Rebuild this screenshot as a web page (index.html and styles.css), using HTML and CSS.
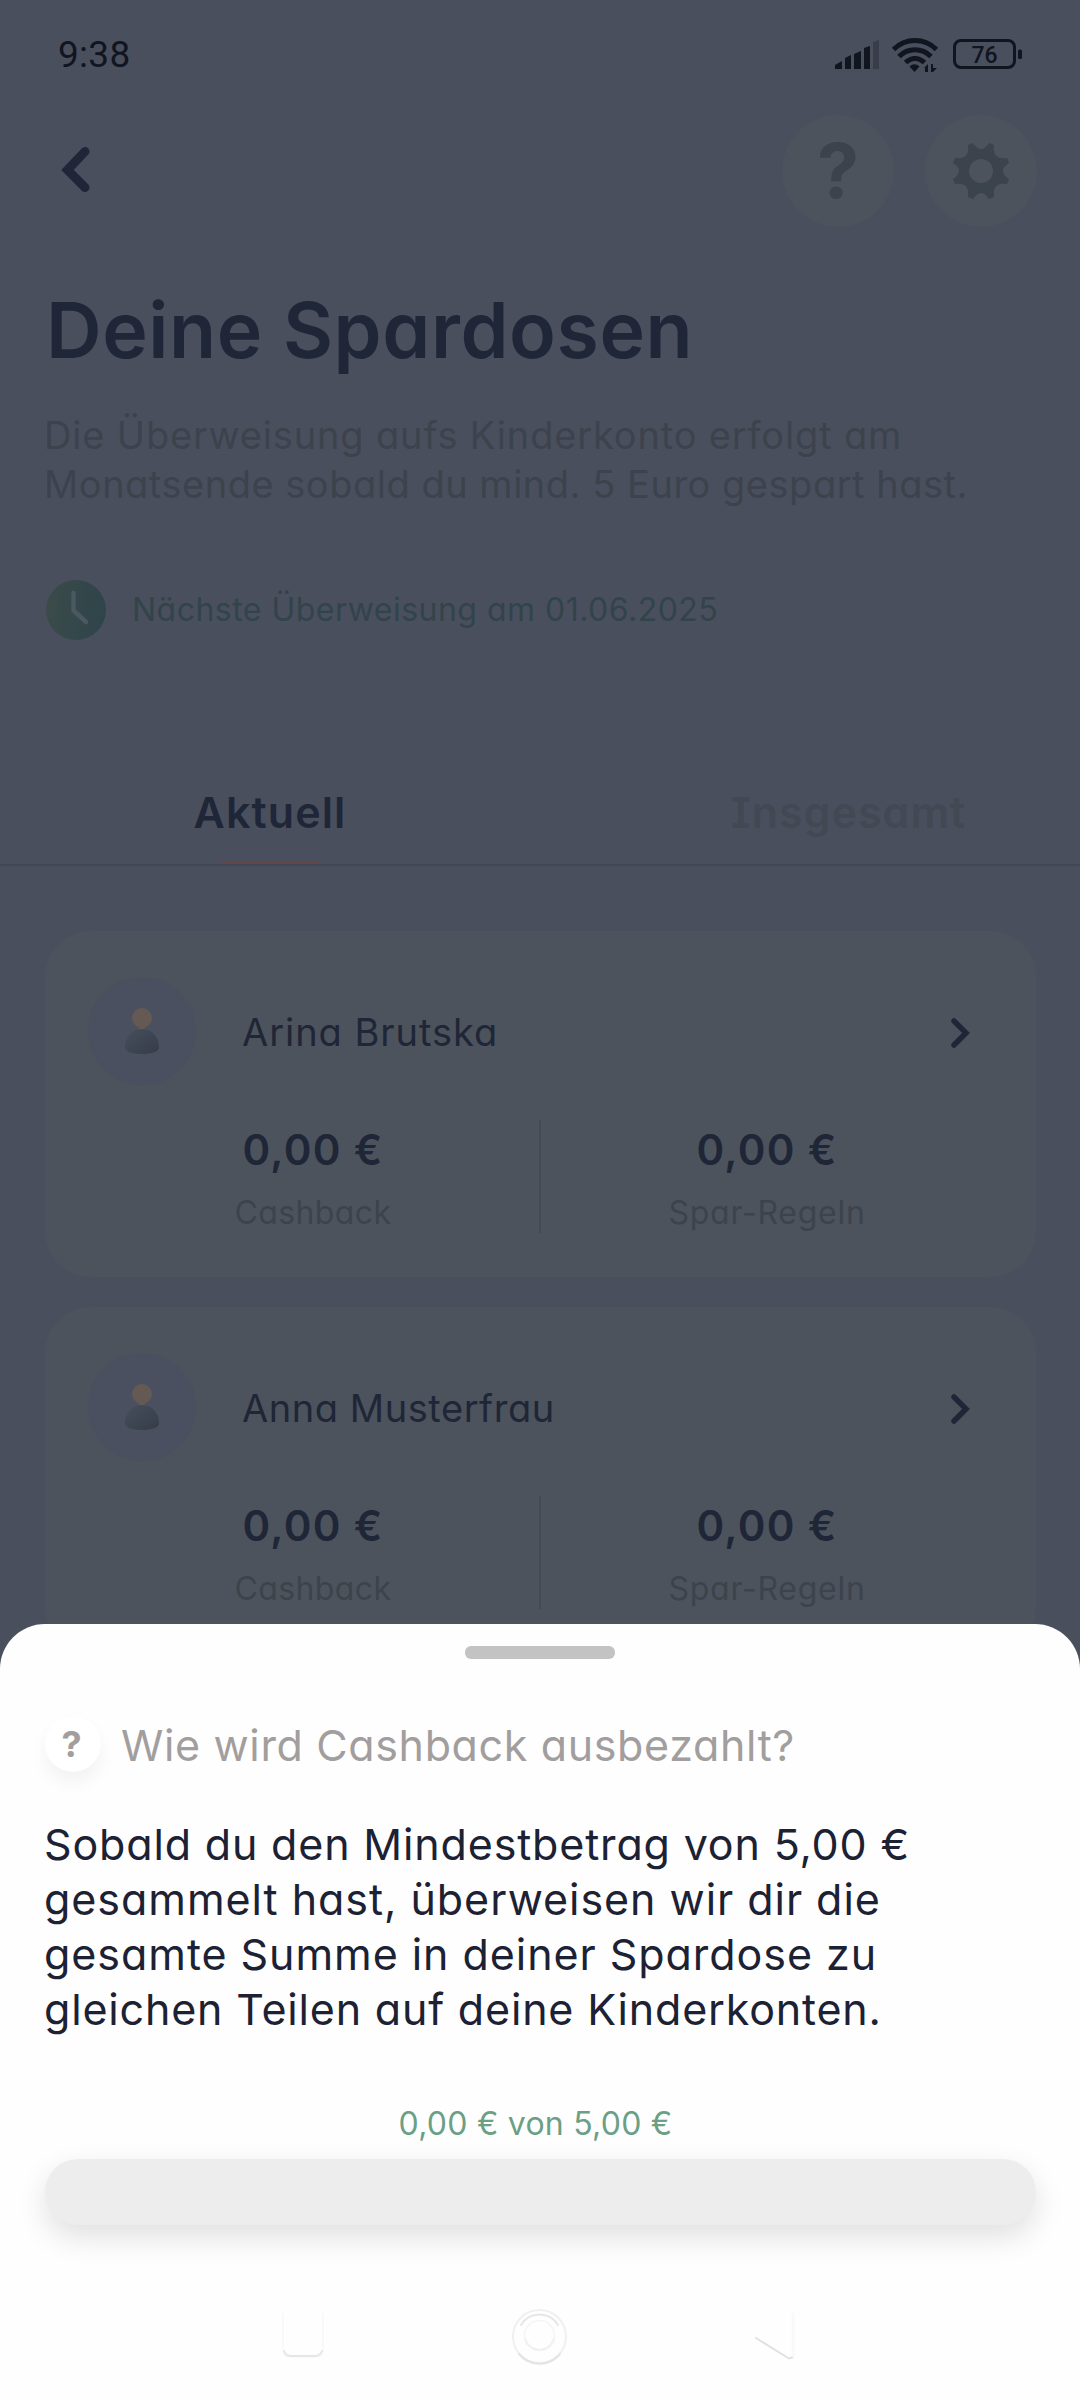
FILE: index.html
```html
<!DOCTYPE html>
<html lang="de">
<head>
<meta charset="utf-8">
<title>Deine Spardosen</title>
<link rel="stylesheet" href="styles.css">
</head>
<body>
<svg class="defs" width="0" height="0">
  <defs>
    <linearGradient id="clock-fill" x1="0" x2="1"><stop offset="0" stop-color="#3a4b49"/><stop offset="1" stop-color="#2f444b"/></linearGradient>
    <linearGradient id="body-fill" x1="0" x2="1" y2="1"><stop offset="0" stop-color="#454e5b"/><stop offset="1" stop-color="#353d49"/></linearGradient>
    <symbol id="person" viewBox="0 0 36 48">
      <circle cx="18" cy="11" r="10" fill="#655953"/>
      <path d="M15 19h6v5h-6z" fill="#655953"/>
      <path d="M18 22c10 0 17 8 17 18 0 5-8 7-17 7s-17-2-17-7c0-10 7-18 17-18z" fill="url(#body-fill)"/>
    </symbol>
    <symbol id="chevron" viewBox="0 0 22 32"><path d="M5 4l12 12L5 28" fill="none" stroke="#1f2637" stroke-width="5.500" stroke-linecap="round"/></symbol>
  </defs>
</svg>
<div class="phone">
  <div class="status">
    <span class="time">9:38</span>
    <svg class="status-icons" width="192" height="40" viewBox="833 34 192 40">
      <g fill="#10151f">
        <path d="M835 65l7-4v8h-7zM845 58l6-3v14h-6zM854 54l7-3v18h-7zM864 48l6-2v23h-6z"/>
        <path d="M873 42l6-2v29h-6z" fill="#383d49"/>
      </g>
      <g fill="none" stroke="#10151f" stroke-width="5">
        <path d="M893.500 49.500c12-12 31-12 43 0M899 56.500c9-9 23-9 32 0M905.500 62.500c6-5.500 13-5.500 19 0"/>
      </g>
      <path d="M909.500 66.500q5-4.500 10 0l-5 5.500zM924 68l4-4v8h-3v-4zM931 64h2v4h4l-4 4h-2z" fill="#10151f"/>
      <rect x="954.500" y="40.500" width="60" height="27" rx="6.500" fill="none" stroke="#10151f" stroke-width="3"/>
      <rect x="1018" y="49.500" width="4" height="9.500" rx="1.500" fill="#10151f"/>
      <text class="battery" x="984.500" y="62.500" text-anchor="middle">76</text>
    </svg>
  </div>
  <header class="bar">
    <svg class="back" width="32" height="50" viewBox="60 146 32 50"><path d="M85 151.500L67.500 170 85 187.500" fill="none" stroke="#1f2637" stroke-width="9" stroke-linecap="round" stroke-linejoin="miter"/></svg>
    <div class="round help">?</div>
    <div class="round">
      <svg width="58" height="58" viewBox="-29 -29 58 58">
        <path fill="#3b434d" d="M-13-26L-8-28Q0-16 8-28L13-26Q11-11 26-13L28-8Q16 0 28 8L26 13Q11 11 13 26L8 28Q0 16-8 28L-13 26Q-11 11-26 13L-28 8Q-16 0-28-8L-26-13Q-11-11-13-26Z"/>
        <circle r="12" fill="#4c535c"/>
      </svg>
    </div>
  </header>
  <h1 class="title">Deine Spardosen</h1>
  <p class="intro"><span class="intro-a">Die Überweisung aufs Kinderkonto erfolgt am</span><br><span class="intro-b">Monatsende sobald du mind. 5 Euro gespart hast.</span></p>
  <div class="next">
    <svg width="60" height="60" viewBox="0 0 60 60"><circle cx="30" cy="30" r="30" fill="url(#clock-fill)"/><path d="M27.500 13v17.500L40 42" fill="none" stroke="#4b5861" stroke-width="4.500" stroke-linecap="round" stroke-linejoin="round"/></svg>
    <span>Nächste Überweisung am 01.06.2025</span>
  </div>
  <nav class="tabs">
    <div class="tab active">Aktuell</div>
    <div class="tab off">Insgesamt</div>
  </nav>
  <main class="cards">
    <section class="card">
      <div class="who">
        <div class="avatar"><svg width="36" height="48"><use href="#person"/></svg></div>
        <span class="name arina">Arina Brutska</span>
        <svg class="go" width="22" height="32"><use href="#chevron"/></svg>
      </div>
      <div class="stats">
        <div class="stat"><b>0,00 €</b><span class="cash">Cashback</span></div>
        <div class="stat"><b>0,00 €</b><span class="rules">Spar-Regeln</span></div>
      </div>
    </section>
    <section class="card">
      <div class="who">
        <div class="avatar"><svg width="36" height="48"><use href="#person"/></svg></div>
        <span class="name anna">Anna Musterfrau</span>
        <svg class="go" width="22" height="32"><use href="#chevron"/></svg>
      </div>
      <div class="stats">
        <div class="stat"><b>0,00 €</b><span class="cash">Cashback</span></div>
        <div class="stat"><b>0,00 €</b><span class="rules">Spar-Regeln</span></div>
      </div>
    </section>
  </main>
  <aside class="sheet">
    <div class="handle"></div>
    <div class="question"><span class="badge">?</span><h2>Wie wird Cashback ausbezahlt?</h2></div>
    <p class="answer"><span class="l1">Sobald du den Mindestbetrag von 5,00 €</span><br><span class="l2">gesammelt hast, überweisen wir dir die</span><br><span class="l3">gesamte Summe in deiner Spardose zu</span><br><span class="l4">gleichen Teilen auf deine Kinderkonten.</span></p>
    <div class="amount">0,00 € von 5,00 €</div>
    <div class="progress"></div>
    <svg class="keys" width="520" height="60" viewBox="280 2308 520 60" fill="none" stroke-linecap="round">
      <path d="M283 2314v36q0 7 7 7h26q7 0 7-7v-36" stroke="#f9f9f9" stroke-width="2"/>
      <path d="M284 2351q2 5 7 5h24q5 0 7-5" stroke="#e6e6e6" stroke-width="2"/>
      <circle cx="539.500" cy="2336.500" r="26.500" stroke="#f0f0f0" stroke-width="2"/>
      <path d="M519 2354a26.500 26.500 0 0 0 41 0" stroke="#e4e4e4" stroke-width="2"/>
      <path d="M521 2325a21.500 21.500 0 0 1 37 0M525 2339a15 15 0 0 0 29 0" stroke="#e6e6e6" stroke-width="2"/>
      <circle cx="539.500" cy="2335.500" r="15" stroke="#f5f5f5" stroke-width="1.500"/>
      <path d="M793 2314v44" stroke="#f9f9f9" stroke-width="3"/>
      <path d="M756 2338l33 20.500 3-1" stroke="#e2e2e2" stroke-width="2"/>
    </svg>
  </aside>
</div>
</body>
</html>
```
FILE: styles.css
```css
* { box-sizing: border-box; margin: 0; }
body { background: #4a4f5e; font-family: Inter, "Noto Sans", sans-serif; font-feature-settings: "cv11"; white-space: nowrap; }
.defs { display: block; }
.phone { position: relative; width: 1080px; height: 2400px; overflow: hidden; background: #4a4f5e; color: #1f2637; }

.status { display: flex; justify-content: space-between; height: 105px; padding: 34px 55px 0 58px; }
.time { font: 430 37px/40px Roboto, sans-serif; color: #10151f; padding-top: 1px; letter-spacing: .3px; }
.battery { font: 500 23px Roboto, sans-serif; fill: #10151f; }

.bar { display: flex; align-items: center; height: 132px; padding: 0 43px 0 60px; gap: 31px; }
.back { margin-right: auto; }
.round { display: flex; align-items: center; justify-content: center; width: 112px; height: 112px; border-radius: 50%; background: #4c535c; }
.help { font-size: 75px; font-weight: 700; line-height: 112px; color: #3b434d; }

.title { margin: 48px 0 0 46px; font-size: 77px; font-weight: 620; line-height: 90px; letter-spacing: .6px; }
.intro { margin: 36px 0 0 44px; font-size: 38px; font-weight: 430; line-height: 49px; color: #3c434c; }
.intro-a { letter-spacing: .84px; }
.intro-b { letter-spacing: .51px; }
.next { display: flex; align-items: center; gap: 26px; height: 60px; margin: 71px 0 0 46px; font-size: 32px; font-weight: 430; color: #31444a; letter-spacing: .48px; }
.next span { padding-bottom: 2px; }

.tabs { display: grid; grid-template-columns: 540px 1fr; height: 105px; margin-top: 121px; padding-right: 1px; border-bottom: 2px solid #434857; font-size: 43px; font-weight: 600; line-height: 103px; text-align: center; }
.tab { position: relative; }
.active { letter-spacing: 1.1px; }
.active::after { content: ""; position: absolute; left: 221px; bottom: 0; width: 98px; height: 3px; background: #634746; }
.off { padding-left: 78px; color: #424953; letter-spacing: 1px; font-feature-settings: "cv11", "cv08"; }

.cards { display: flex; flex-direction: column; gap: 30px; padding: 65px 44px 0 45px; }
.card { height: 346px; padding: 45px 0 0; border-radius: 45px; background: #4c535c; }
.who { display: flex; align-items: center; height: 110px; padding: 0 65px 0 43px; }
.avatar { display: flex; align-items: center; justify-content: center; width: 108px; height: 108px; padding-right: 1px; border-radius: 50%; background: #4a505f; }
.name { flex: 1; padding: 2px 0 0 46px; font-size: 38px; font-weight: 430; line-height: 46px; }
.arina { letter-spacing: .95px; }
.anna { letter-spacing: .55px; }
.go { margin-top: 4px; }
.stats { display: grid; grid-template-columns: 1fr 1fr; margin: 34px 44px 0 41px; height: 112px; }
.stat { display: flex; flex-direction: column; align-items: center; gap: 18px; padding-top: 5px; }
.stat + .stat { border-left: 2px solid #434a54; }
.stat b { padding-left: 1px; font-size: 42px; font-weight: 560; line-height: 50px; letter-spacing: 1.3px; }
.stat span { padding-left: 1px; font-size: 32px; font-weight: 430; line-height: 40px; color: #3c434c; }
.cash { letter-spacing: .4px; }
.rules { letter-spacing: .75px; }

.sheet { position: absolute; left: 0; bottom: 0; width: 1080px; height: 776px; padding: 22px 44px 0 45px; border-radius: 45px 45px 0 0; background: #fefefe; }
.handle { width: 150px; height: 13px; margin-left: 420px; border-radius: 6px; background: #c3c3c3; }
.question { display: flex; align-items: center; gap: 20px; height: 56px; margin-top: 57px; color: #a39e9e; }
.question h2 { padding-top: 2px; font-size: 43px; font-weight: 430; line-height: 50px; letter-spacing: .64px; }
.badge { width: 56px; height: 56px; padding-right: 3px; border-radius: 50%; background: #fff; box-shadow: 0 10px 18px rgba(0, 0, 0, .05); font-size: 36px; font-weight: 650; line-height: 56px; text-align: center; }
.answer { margin: 45px 0 0 -1px; font-size: 43px; font-weight: 430; line-height: 55px; color: #1c2133; }
.l1 { letter-spacing: .84px; }
.l2 { letter-spacing: .96px; }
.l3 { letter-spacing: .95px; }
.l4 { letter-spacing: .82px; }
.amount { margin: 67px 0 0; padding-right: 10px; font-size: 32px; font-weight: 430; line-height: 40px; letter-spacing: .25px; text-align: center; color: #6b9f86; }
.progress { height: 66px; margin-top: 15px; border-radius: 33px; background: #ededed; box-shadow: 0 12px 30px rgba(0, 0, 0, .12); }
.keys { display: block; margin: 83px 0 0 235px; }
```
